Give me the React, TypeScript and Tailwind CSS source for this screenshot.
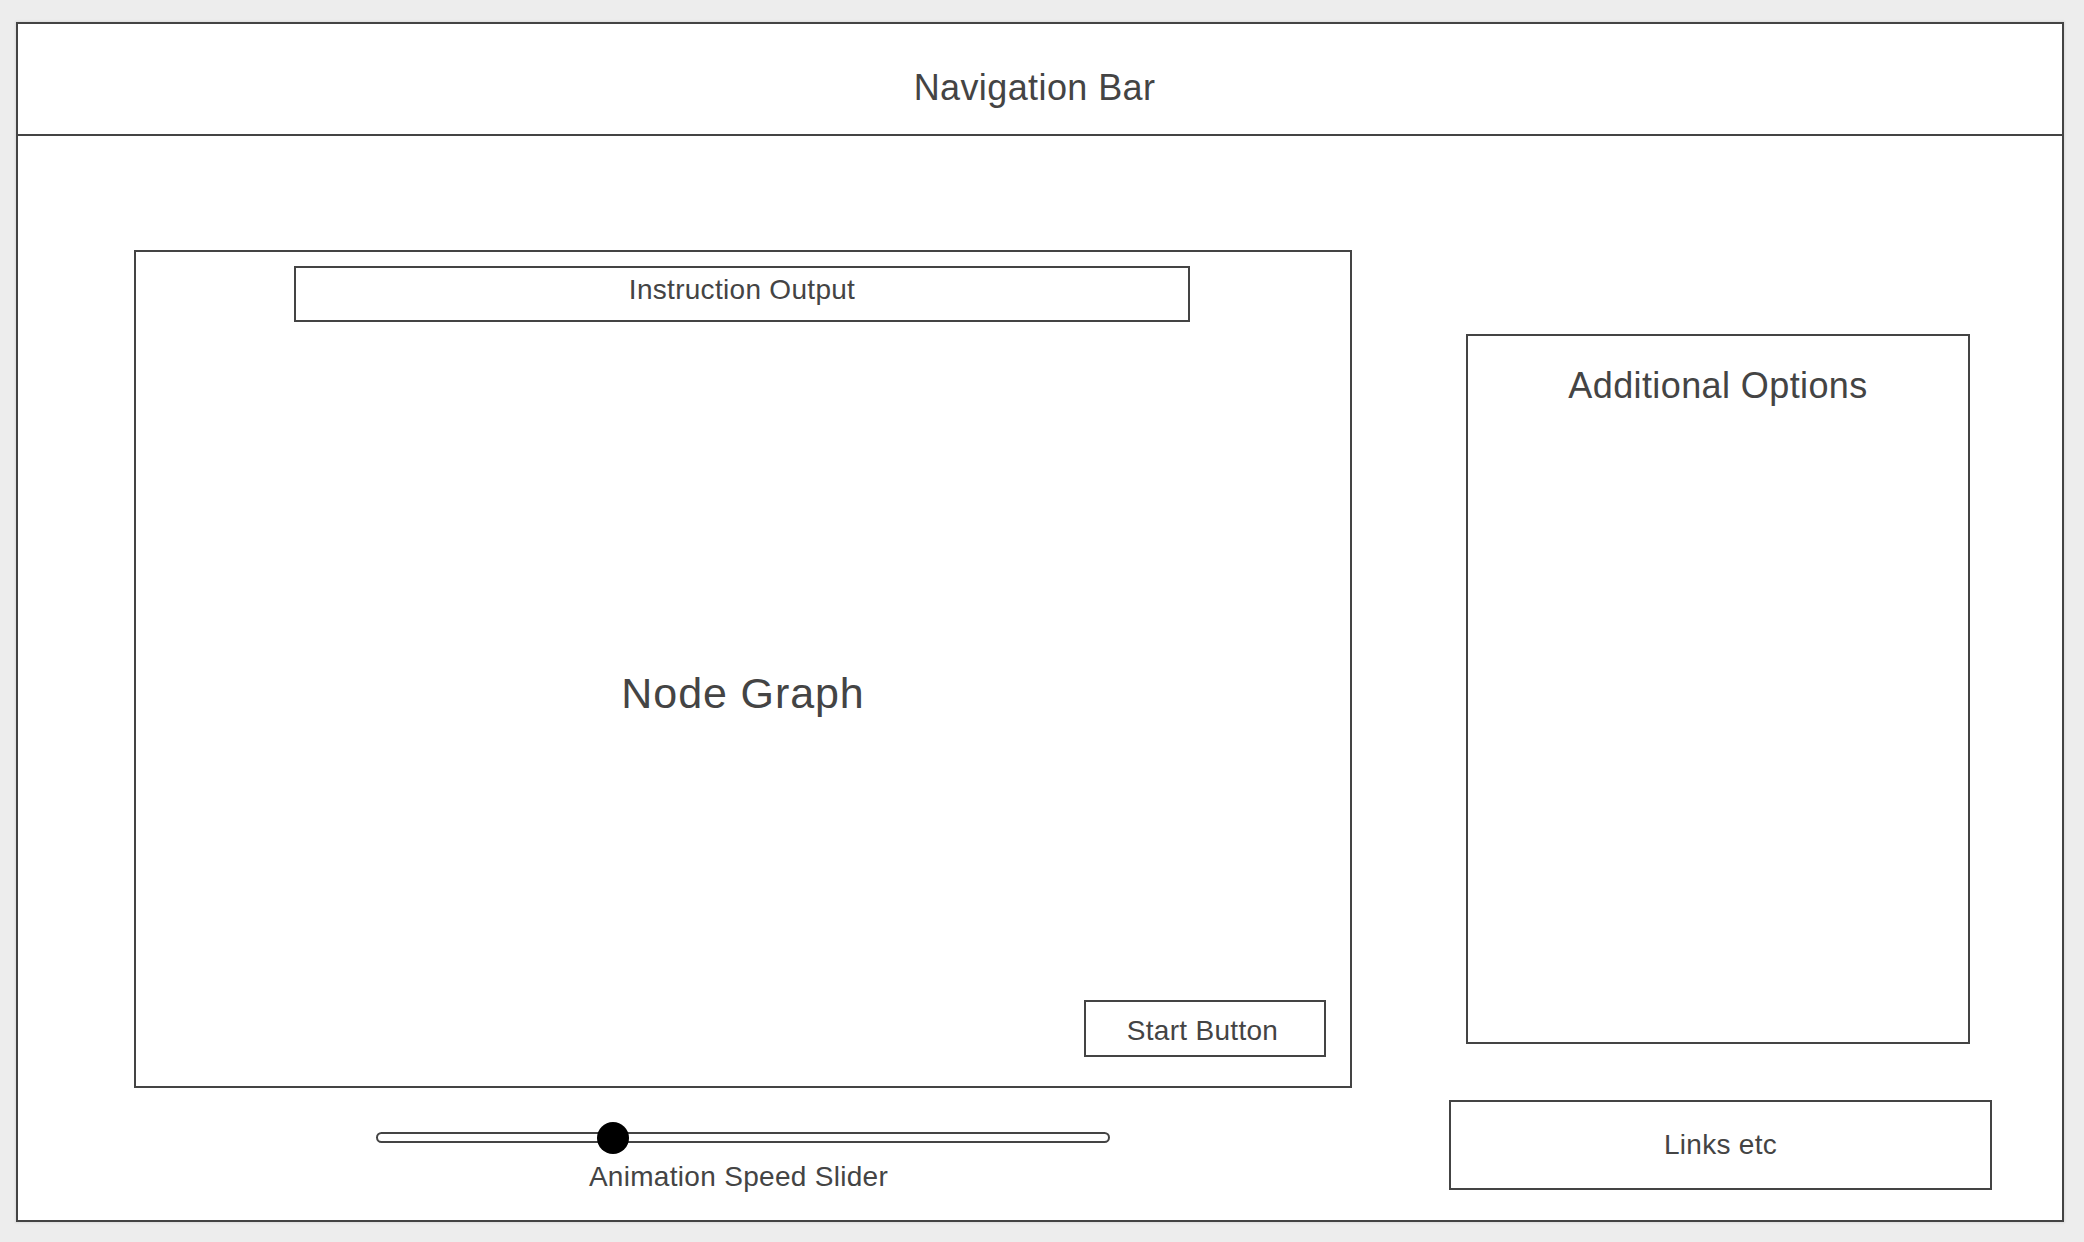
import React from "react";

const font = { fontFamily: '"Liberation Sans", Arial, sans-serif' };

const App = () => {
    return (
        <div className="min-h-screen bg-[#ededed] pt-[22px] pl-[16px] text-[#444444]" style={font}>
            <div className="w-[2048px] h-[1200px] border-2 border-[#444444] bg-white flex flex-col shadow-[0_0_2px_1px_rgba(0,0,0,0.07)]">
                {/* nav */}
                <div className="h-[112px] border-b-2 border-[#444444] flex justify-center pt-[46px] pr-[11px]">
                    <span className="text-[36px] leading-none tracking-[0.4px]">Navigation Bar</span>
                </div>

                <div className="flex flex-1 pl-[116px]">
                    {/* left column */}
                    <div className="flex flex-col pt-[114px]">
                        <div className="w-[1218px] h-[838px] border-2 border-[#444444] flex flex-col">
                            <div className="mt-[14px] ml-[158px] w-[896px] h-[56px] border-2 border-[#444444] flex justify-center pt-[8px]">
                                <span className="text-[28px] leading-none tracking-[0.3px]">Instruction Output</span>
                            </div>
                            <div className="mt-[350px] text-center text-[43px] leading-none tracking-[0.9px]">Node Graph</div>
                            <div className="mt-auto mb-[29px] mr-[24px] self-end w-[242px] h-[57px] border-2 border-[#444444] flex justify-center pt-[15px] pr-[5px]">
                                <span className="text-[28px] leading-none tracking-[0.3px]">Start Button</span>
                            </div>
                        </div>

                        {/* slider */}
                        <div className="ml-[242px] w-[734px] mt-[44px] flex flex-col">
                            <div className="relative h-[11px] rounded-full border-2 border-[#444444]">
                                <div className="absolute left-[219px] top-[-12px] w-[32px] h-[32px] rounded-full bg-black" />
                            </div>
                            <div className="mt-[20px] text-center text-[28px] leading-none tracking-[0.3px] pr-[9px]">Animation Speed Slider</div>
                        </div>
                    </div>

                    {/* right column */}
                    <div className="ml-[97px] pt-[198px] flex flex-col">
                        <div className="ml-[17px] w-[504px] h-[710px] border-2 border-[#444444] flex justify-center pt-[32px]">
                            <span className="text-[36px] leading-none tracking-[0.4px]">Additional Options</span>
                        </div>
                        <div className="mt-[56px] w-[543px] h-[90px] border-2 border-[#444444] flex items-center justify-center">
                            <span className="text-[28px] leading-none tracking-[0.3px]">Links etc</span>
                        </div>
                    </div>
                </div>
            </div>
        </div>
    );
};

export default App;
